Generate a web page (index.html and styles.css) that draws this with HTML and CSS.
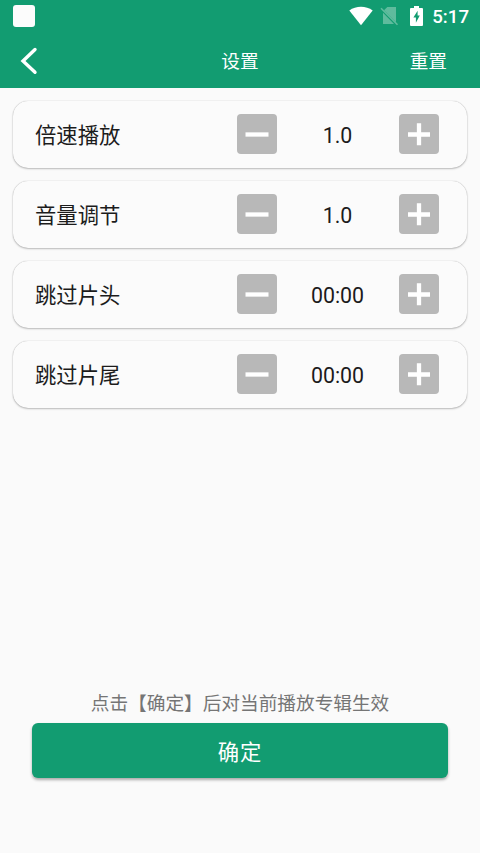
FILE: index.html
```html
<!DOCTYPE html>
<html lang="zh-CN">
<head>
<meta charset="utf-8">
<title>设置</title>
<link rel="stylesheet" href="styles.css">
</head>
<body>
<header class="header">
  <div class="status">
    <span class="status-app"></span>
    <svg class="wifi" width="24" height="20" viewBox="0 0 24 20"><path d="M12 19.3 0.3 4.4C7-.6 17-.6 23.7 4.4Z"/></svg>
    <svg class="sim" width="19" height="20" viewBox="0 0 19 20"><path class="sim-card" d="M7.3 1H16v15.2L4 4.3ZM3 6.7 14 18H3Z"/><path class="sim-slash" d="M1 2.3 17.5 18.8"/></svg>
    <svg class="battery" width="13" height="20" viewBox="0 0 13 20"><path fill-rule="evenodd" d="M4 0h5v2h3q1 0 1 1v16q0 1-1 1H1q-1 0-1-1V3q0-1 1-1h3ZM7.6 4.8 3.4 11.6h2.5v5.2L9.8 9.6H7.6Z"/></svg>
    <span class="clock">5:17</span>
  </div>
  <nav class="toolbar">
    <svg class="back" width="18" height="28" viewBox="0 0 18 28"><path d="M15 2.5 3 14 15 25.3"/></svg>
    <span class="title">设置</span>
    <span class="reset">重置</span>
  </nav>
</header>
<main class="settings">
  <section class="card">
    <span class="label">倍速播放</span>
    <button class="step" aria-label="减"><svg width="40" height="40"><path d="M8.5 20.5h23"/></svg></button>
    <span class="value">1.0</span>
    <button class="step" aria-label="加"><svg width="40" height="40"><path d="M9 20.5h22M20 9.3v22"/></svg></button>
  </section>
  <section class="card">
    <span class="label">音量调节</span>
    <button class="step" aria-label="减"><svg width="40" height="40"><path d="M8.5 20.5h23"/></svg></button>
    <span class="value">1.0</span>
    <button class="step" aria-label="加"><svg width="40" height="40"><path d="M9 20.5h22M20 9.3v22"/></svg></button>
  </section>
  <section class="card">
    <span class="label">跳过片头</span>
    <button class="step" aria-label="减"><svg width="40" height="40"><path d="M8.5 20.5h23"/></svg></button>
    <span class="value">00:00</span>
    <button class="step" aria-label="加"><svg width="40" height="40"><path d="M9 20.5h22M20 9.3v22"/></svg></button>
  </section>
  <section class="card">
    <span class="label">跳过片尾</span>
    <button class="step" aria-label="减"><svg width="40" height="40"><path d="M8.5 20.5h23"/></svg></button>
    <span class="value">00:00</span>
    <button class="step" aria-label="加"><svg width="40" height="40"><path d="M9 20.5h22M20 9.3v22"/></svg></button>
  </section>
</main>
<footer class="footer">
  <p class="hint">点击【确定】后对当前播放专辑生效</p>
  <button class="confirm">确定</button>
</footer>
</body>
</html>
```
FILE: styles.css
```css
* { box-sizing: border-box; }
body {
  margin: 0;
  height: 853px;
  display: flex;
  flex-direction: column;
  overflow: hidden;
  background: #fafafa;
  color: #1c1c1c;
  font-family: Roboto, "Noto Sans CJK SC", sans-serif;
}
button { border: 0; padding: 0; font: inherit; }
svg { display: block; flex: none; }
.header { height: 88px; flex: none; background: #129c71; color: #fff; }
.status { height: 32px; display: flex; align-items: center; padding: 0 11px 0 13px; }
.status-app { width: 22px; height: 22px; border-radius: 3px; background: #fcfcfc; margin-right: auto; }
.wifi { fill: #fff; margin-bottom: 1px; }
.sim { margin-left: 7px; }
.sim-card { fill: #5fbb9d; }
.sim-slash { stroke: #5fbb9d; stroke-width: 1.6; }
.battery { fill: #fff; margin-left: 11px; }
.clock { margin-left: 9px; font-size: 18.67px; font-weight: 500; line-height: 32px; padding-top: 2px; }
.toolbar {
  height: 56px;
  display: grid;
  grid-template-columns: 1fr auto 1fr;
  align-items: center;
  padding: 2px 33px 0 19px;
  font-size: 18.67px;
  line-height: 28px;
}
.back { margin-left: 1px; fill: none; stroke: #fff; stroke-width: 3.4; stroke-linecap: round; stroke-linejoin: miter; }
.title { padding-left: 14px; }
.title, .reset { padding-top: 2px; }
.reset { justify-self: end; }
.settings { display: flex; flex-direction: column; gap: 13px; padding: 13px 13px 0; }
.card {
  height: 67px;
  display: flex;
  align-items: center;
  padding: 0 28px 0 22px;
  border-radius: 15px;
  background: #fbfbfb;
  box-shadow: 0 0 1px rgba(0,0,0,.3), 0 1px 2px rgba(0,0,0,.24);
}
.label { flex: 1; font-size: 21.33px; line-height: 32px; padding-top: 2px; }
.step { width: 40px; height: 40px; margin-bottom: 1px; border-radius: 4px; background: #b8b8b8; }
.step path { fill: none; stroke: #fff; stroke-width: 4.3; }
.value { width: 122px; text-align: center; font-size: 21.33px; line-height: 32px; padding: 2px 1px 0 0; }
.footer { margin-top: auto; padding: 0 32px 75px; }
.hint { margin: 0 0 5px; text-align: center; white-space: nowrap; color: #757575; font-size: 18.67px; line-height: 28px; }
.confirm {
  display: block;
  width: 100%;
  height: 55px;
  border-radius: 6px;
  background: #129c71;
  color: #fff;
  font-size: 21.33px;
  letter-spacing: 1px;
  box-shadow: 0 2px 3px rgba(0,0,0,.32);
}
```
